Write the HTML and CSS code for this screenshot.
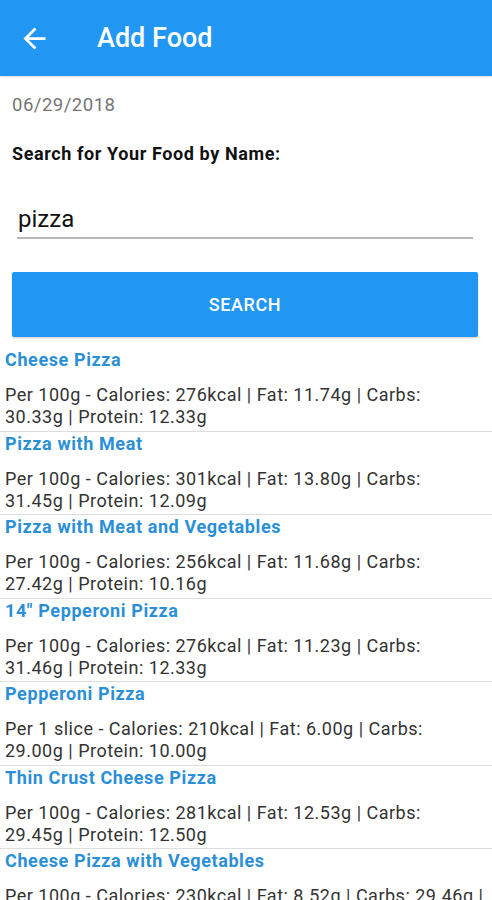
FILE: index.html
```html
<!DOCTYPE html>
<html>
<head>
<meta charset="utf-8">
<link rel="stylesheet" href="styles.css">
</head>
<body>
<header class="appbar">
  <svg class="back" viewBox="0 0 24 24" width="33" height="33"><path fill="#fff" d="M20 11H7.83l5.59-5.59L12 4l-8 8 8 8 1.41-1.41L7.83 13H20v-2z"/></svg>
  <h1 class="title">Add Food</h1>
</header>
<main class="content">
  <div class="date">06/29/2018</div>
  <div class="label">Search for Your Food by Name:</div>
  <div class="input"><span>pizza</span></div>
  <div class="btn">SEARCH</div>
  <ul class="list">
    <li class="item"><div class="name">Cheese Pizza</div><div class="desc">Per 100g - Calories: 276kcal | Fat: 11.74g | Carbs:<br>30.33g | Protein: 12.33g</div></li>
    <li class="item"><div class="name">Pizza with Meat</div><div class="desc">Per 100g - Calories: 301kcal | Fat: 13.80g | Carbs:<br>31.45g | Protein: 12.09g</div></li>
    <li class="item"><div class="name">Pizza with Meat and Vegetables</div><div class="desc">Per 100g - Calories: 256kcal | Fat: 11.68g | Carbs:<br>27.42g | Protein: 10.16g</div></li>
    <li class="item"><div class="name">14" Pepperoni Pizza</div><div class="desc">Per 100g - Calories: 276kcal | Fat: 11.23g | Carbs:<br>31.46g | Protein: 12.33g</div></li>
    <li class="item"><div class="name">Pepperoni Pizza</div><div class="desc">Per 1 slice - Calories: 210kcal | Fat: 6.00g | Carbs:<br>29.00g | Protein: 10.00g</div></li>
    <li class="item"><div class="name">Thin Crust Cheese Pizza</div><div class="desc">Per 100g - Calories: 281kcal | Fat: 12.53g | Carbs:<br>29.45g | Protein: 12.50g</div></li>
    <li class="item"><div class="name">Cheese Pizza with Vegetables</div><div class="desc">Per 100g - Calories: 230kcal | Fat: 8.52g | Carbs: 29.46g |<br>Protein: 10.45g</div></li>
  </ul>
</main>
</body>
</html>
```
FILE: styles.css
```css
* { box-sizing: border-box; }
html, body { margin: 0; padding: 0; background: #fff; }
body { font-family: Roboto, "Noto Sans", sans-serif; width: 492px; height: 900px; overflow: hidden; }
.appbar {
  height: 76px;
  background: #2196f3;
  display: flex;
  align-items: center;
  padding-left: 18px;
  box-shadow: 0 1px 2px rgba(0,0,0,0.15);
}
.back { display: block; }
.title {
  margin: 0 0 0 46px;
  color: #fff;
  font-size: 27px;
  font-weight: 500;
}
.date {
  margin: 16px 0 0 12px;
  color: #757575;
  font-size: 18.5px;
  letter-spacing: 0.5px;
  line-height: 26px;
}
.label {
  margin: 23px 0 0 12px;
  font-size: 18px;
  letter-spacing: 0.6px;
  font-weight: 700;
  color: #111;
  line-height: 26px;
}
.input {
  margin: 37px 19px 0 17px;
  border-bottom: 2px solid #b8b8b8;
  padding: 0 0 3px 1px;
  font-size: 24px;
  line-height: 30px;
  color: #111;
}
.btn {
  margin: 33px 14px 0 12px;
  height: 65px;
  background: #2196f3;
  color: #fff;
  font-size: 18px;
  letter-spacing: 0.6px;
  font-weight: 500;
  display: flex;
  align-items: center;
  justify-content: center;
  border-radius: 2px;
  box-shadow: 0 1px 2px rgba(0,0,0,0.2);
}
.list { list-style: none; margin: 11px 0 0 0; padding: 0; }
.item {
  border-bottom: 1px solid #ddd;
  padding: 0 4px 2.5px 5px;
}
.name {
  color: #2b8fd8;
  font-weight: 700;
  font-size: 18px;
  letter-spacing: 0.6px;
  line-height: 24px;
}
.desc {
  margin-top: 12px;
  color: #333;
  font-size: 18px;
  letter-spacing: 0.5px;
  line-height: 22px;
  white-space: nowrap;
}
```
